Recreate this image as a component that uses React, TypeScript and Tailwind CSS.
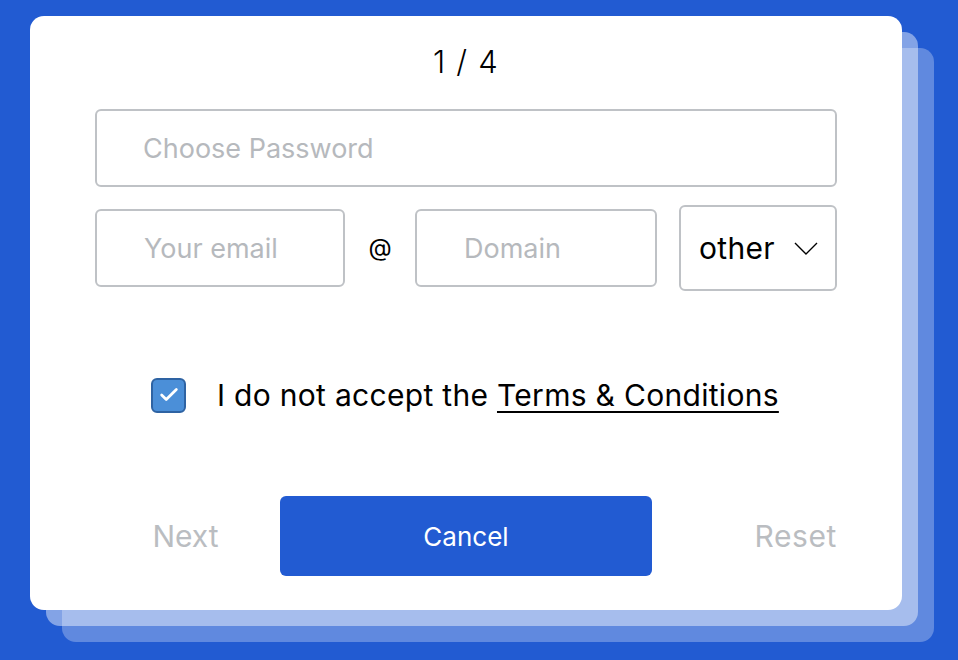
import { Check } from "lucide-react";

const font = { fontFamily: "Inter, 'Noto Sans', sans-serif" };

function TextField({ placeholder, width }: { placeholder: string; width: string }) {
  return (
    <input
      placeholder={placeholder}
      className={`${width} h-[78px] rounded-[6px] border-2 border-[#bfc2c6] pl-[47px] text-[27px] text-black outline-none placeholder:text-[#b6b9bd]`}
    />
  );
}

export default function App() {
  return (
    <div className="h-[660px] w-[958px] overflow-hidden bg-[#225bd2] pl-[30px] pt-[16px]" style={font}>
      <div className="relative h-[594px] w-[872px]">
        <div className="absolute left-[32px] top-[32px] h-[594px] w-[872px] rounded-[14px] bg-white/[0.28]" />
        <div className="absolute left-[16px] top-[16px] h-[594px] w-[872px] rounded-[14px] bg-white/[0.44]" />

        <div className="relative flex h-[594px] w-[872px] flex-col rounded-[14px] bg-white px-[65px] pt-[24px]">
          <div className="h-[44px] text-center text-[31px] font-light leading-[44px] tracking-[0.04em] text-black">1 / 4</div>

          <input
            placeholder="Choose Password"
            className="mt-[25px] h-[78px] w-full rounded-[6px] border-2 border-[#bfc2c6] pl-[46px] text-[27px] outline-none placeholder:text-[#b6b9bd]"
          />

          <div className="mt-[18px] flex h-[86px] items-center">
            <TextField placeholder="Your email" width="w-[250px]" />
            <div className="w-[70px] text-center text-[24px] text-black">@</div>
            <TextField placeholder="Domain" width="w-[242px]" />
            <button className="ml-[22px] flex h-[86px] w-[158px] items-center justify-between rounded-[6px] border-2 border-[#bfc2c6] pl-[18px] pr-[17px] text-[30px] tracking-[0.01em] text-black">
              <span>other</span>
              <svg width="24" height="13" viewBox="0 0 24 13" fill="none" stroke="currentColor" strokeWidth="1.4">
                <polyline points="1,1 12,12 23,1" />
              </svg>
            </button>
          </div>

          <div className="mt-[84px] flex h-[40px] items-center pl-[56px]">
            <div className="flex h-[35px] w-[35px] items-center justify-center rounded-[6px] border-2 border-[#2e63a3] bg-[#4b8fd8]">
              <Check size={22} strokeWidth={3} className="text-white" />
            </div>
            <span className="ml-[31px] text-[30px] tracking-[0.01em] text-black">
              I do not accept the{" "}
              <span className="underline decoration-[1.5px] underline-offset-[5px]">Terms &amp; Conditions</span>
            </span>
          </div>

          <div className="mt-[81px] flex h-[80px] items-center">
            <button className="w-[185px] pr-[4px] text-center text-[30px] text-[#babdc1]">Next</button>
            <button className="h-[80px] w-[372px] rounded-[6px] bg-[#225bd2] text-[26px] text-white">Cancel</button>
            <button className="flex-1 text-right text-[30px] tracking-[0.02em] text-[#babdc1]">Reset</button>
          </div>
        </div>
      </div>
    </div>
  );
}
